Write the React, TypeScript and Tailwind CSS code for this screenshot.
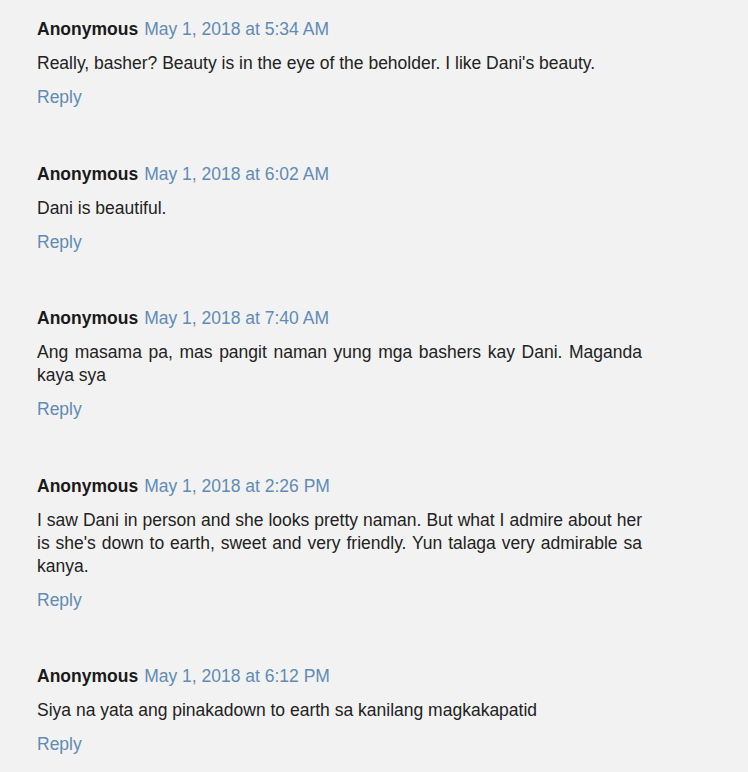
import React from 'react';

interface Comment {
  id: number;
  date: string;
  body: string;
}

const comments: Comment[] = [
  { id: 1, date: 'May 1, 2018 at 5:34 AM', body: "Really, basher? Beauty is in the eye of the beholder. I like Dani's beauty." },
  { id: 2, date: 'May 1, 2018 at 6:02 AM', body: 'Dani is beautiful.' },
  { id: 3, date: 'May 1, 2018 at 7:40 AM', body: 'Ang masama pa, mas pangit naman yung mga bashers kay Dani. Maganda kaya sya' },
  {
    id: 4,
    date: 'May 1, 2018 at 2:26 PM',
    body: "I saw Dani in person and she looks pretty naman. But what I admire about her is she's down to earth, sweet and very friendly. Yun talaga very admirable sa kanya."
  },
  { id: 5, date: 'May 1, 2018 at 6:12 PM', body: 'Siya na yata ang pinakadown to earth sa kanilang magkakapatid' }
];

const CommentItem: React.FC<{ comment: Comment }> = ({ comment }) => (
  <div className="mb-[53.5px]">
    <div className="flex items-baseline">
      <span className="font-bold text-[#1a1a1a]">Anonymous</span>
      <a className="ml-[6px] text-[#5f8bb6]">{comment.date}</a>
    </div>
    <p className="mt-[11px] w-[605px] text-justify text-[#222]">{comment.body}</p>
    <a className="mt-[11px] block text-[#5f8bb6]">Reply</a>
  </div>
);

export default function App() {
  return (
    <div
      className="h-[772px] w-[748px] overflow-hidden bg-[#f2f2f2] pl-[37px] pt-[18px] text-[17.5px] leading-[23px]"
      style={{ fontFamily: '"Liberation Sans", Arial, sans-serif' }}
    >
      {comments.map((c) => (
        <CommentItem key={c.id} comment={c} />
      ))}
    </div>
  );
}
